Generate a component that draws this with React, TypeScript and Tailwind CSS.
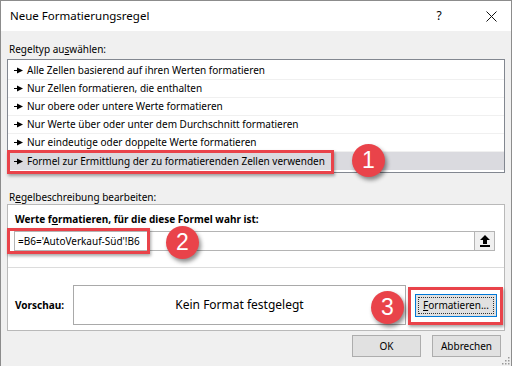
import React from "react";

const Pointer = () => (
  <svg width="9" height="7" viewBox="0 0 9 7" className="shrink-0">
    <rect x="0" y="3" width="4" height="1" fill="#000" />
    <polygon points="3,0.5 9,3.5 3,6.5" fill="#000" />
  </svg>
);

const Badge = ({ n, className }: { n: string; className: string }) => (
  <div
    className={
      "absolute w-[33px] h-[33px] rounded-full bg-[#e9434a] text-white flex items-center justify-center text-[23px] shadow-[2px_3px_4px_rgba(0,0,0,0.45)] " +
      className
    }
    style={{ fontFamily: "'Liberation Sans', Arial, sans-serif" }}
  >
    {n}
  </div>
);

const rows = [
  "Alle Zellen basierend auf ihren Werten formatieren",
  "Nur Zellen formatieren, die enthalten",
  "Nur obere oder untere Werte formatieren",
  "Nur Werte über oder unter dem Durchschnitt formatieren",
  "Nur eindeutige oder doppelte Werte formatieren",
  "Formel zur Ermittlung der zu formatierenden Zellen verwenden",
];

export default function App() {
  return (
    <div
      className="w-[512px] h-[366px] bg-[#f0f0f0] border-l border-t border-r border-[#8c8c8c] relative overflow-hidden text-[10px] text-black flex flex-col"
      style={{ fontFamily: "'Noto Sans', 'Open Sans', sans-serif" }}
    >
      {/* Title bar */}
      <div className="h-[30px] bg-white flex items-center shrink-0">
        <div className="pl-[9px] text-[11.5px] flex-1 leading-none">Neue Formatierungsregel</div>
        <div className="w-[30px] text-center text-[12px] leading-none mr-[22px]">?</div>
        <div className="w-[30px] flex items-center justify-center mr-[5px]">
          <svg width="11" height="11" viewBox="0 0 11 11">
            <path d="M0.5 0.5 L10.5 10.5 M10.5 0.5 L0.5 10.5" stroke="#111" strokeWidth="1" />
          </svg>
        </div>
      </div>

      <div className="flex flex-col px-[6px] pt-[10px]">
        <div className="h-[16px] leading-[16px] pl-[2px]">
          Regeltyp au<span className="underline">s</span>wählen:
        </div>
        <div className="relative mt-[2px] h-[114px] bg-white border border-[#828790] pt-[2px] flex flex-col">
          {rows.map((r, i) => (
            <div
              key={i}
              className={
                "h-[18px] flex items-center gap-[4px] pl-[6px] " +
                (i === 5 ? "bg-[#dadadf]" : "border-b border-[#f0f0f0]")
              }
            >
              <Pointer />
              <span>{r}</span>
            </div>
          ))}
          <div className="absolute left-[-1px] top-[90px] w-[327px] h-[24px] border-[3px] border-[#e9434a] shadow-[1px_2px_3px_rgba(0,0,0,0.35)]" />
        </div>

        <div className="h-[16px] leading-[16px] pl-[2px] mt-[16px]">
          R<span className="underline">e</span>gelbeschreibung bearbeiten:
        </div>
        <div className="mt-[-1px] h-[127px] bg-white border border-[#b9b9b9] flex flex-col relative">
          <div className="pl-[7px] pt-[6px] h-[26px] font-bold leading-[16px]">
            Werte f<span className="underline">o</span>rmatieren, für die diese Formel wahr ist:
          </div>
          <div className="ml-[6px] mr-[9px] h-[20px] border border-[#b4b4b4] flex items-stretch">
            <div className="flex-1 pl-[3px] flex items-center">=B6='AutoVerkauf-Süd'!B6</div>
            <div className="w-[20px] bg-[#f0f0f0] border-l border-[#b4b4b4] flex items-center justify-center">
              <svg width="10" height="12" viewBox="0 0 10 12">
                <polygon points="5,0 10,5 7,5 7,9 3,9 3,5 0,5" fill="#000" />
                <rect x="0" y="10" width="10" height="2" fill="#000" />
              </svg>
            </div>
          </div>
          <div className="mt-[16px] border-t border-[#dcdcdc]" />
          <div className="flex items-center mt-[17px]">
            <div className="w-[65px] pl-[7px] font-bold">Vorschau:</div>
            <div className="w-[333px] h-[40px] border border-[#a9a9a9] flex items-center justify-center text-[12px]">
              Kein Format festgelegt
            </div>
            <div className="ml-[9px] w-[82px] h-[23px] bg-[#e1e1e1] border border-[#0078d7] p-[2px]">
              <div className="w-full h-full border border-dotted border-[#333] flex items-center justify-center">
                <span>
                  <span className="underline">F</span>ormatieren...
                </span>
              </div>
            </div>
          </div>
          <div className="absolute left-[-1px] top-[23px] w-[143px] h-[26px] border-[3px] border-[#e9434a] shadow-[1px_2px_3px_rgba(0,0,0,0.35)]" />
          <div className="absolute left-[400px] top-[82px] w-[95px] h-[38px] border-[3px] border-[#e9434a] shadow-[1px_2px_3px_rgba(0,0,0,0.35)]" />
        </div>

        <div className="flex justify-end gap-[11px] mt-[4px] pr-[4px]">
          <div className="w-[69px] h-[22px] bg-[#e1e1e1] border border-[#adadad] flex items-center justify-center">
            OK
          </div>
          <div className="w-[69px] h-[22px] bg-[#e1e1e1] border border-[#adadad] flex items-center justify-center">
            Abbrechen
          </div>
        </div>
      </div>

      <svg className="absolute right-[1px] bottom-[1px]" width="10" height="10" viewBox="0 0 10 10">
        {[
          [8, 2],
          [8, 5],
          [5, 5],
          [8, 8],
          [5, 8],
          [2, 8],
        ].map(([x, y], i) => (
          <rect key={i} x={x} y={y} width="1.5" height="1.5" fill="#999" />
        ))}
      </svg>

      <Badge n="1" className="left-[351px] top-[143px]" />
      <Badge n="2" className="left-[165px] top-[225px]" />
      <Badge n="3" className="left-[370px] top-[290px]" />
    </div>
  );
}
